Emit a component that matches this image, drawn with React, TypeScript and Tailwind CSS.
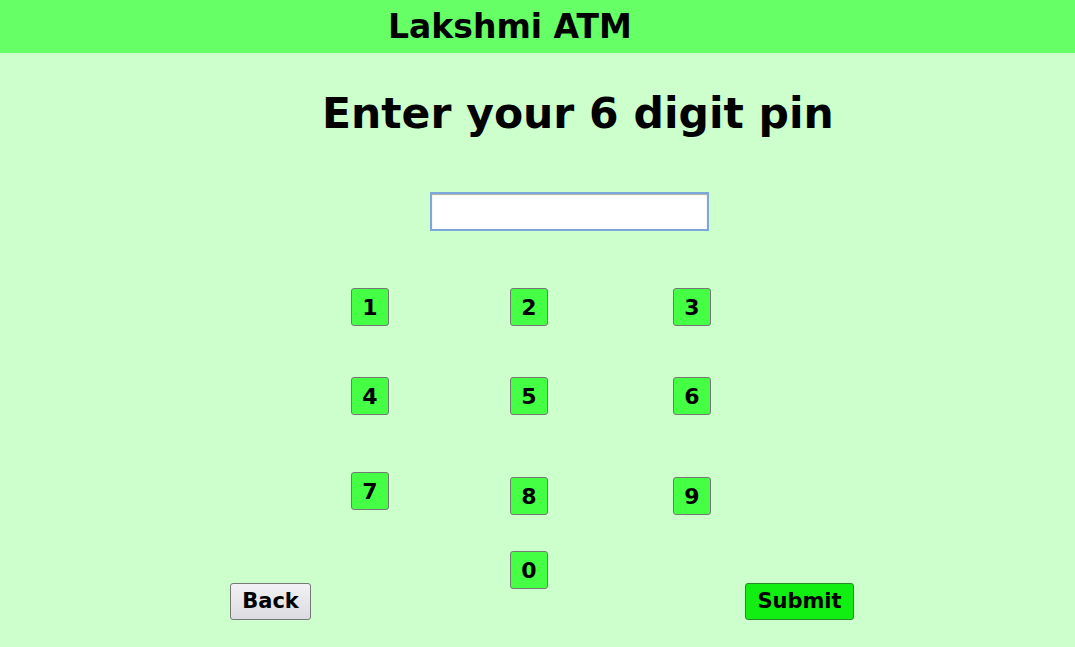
import React, { useState } from 'react'

const font = { fontFamily: '"DejaVu Sans", Verdana, sans-serif' }

function Key({ label, onPress, className = '' }: { label: string; onPress: (d: string) => void; className?: string }) {
  return (
    <button
      onClick={() => onPress(label)}
      className={`w-[38px] h-[38px] bg-[#44ff44] border border-[#777777] rounded-[3px] text-[22px] font-bold text-black flex items-center justify-center ${className}`}
    >
      {label}
    </button>
  )
}

export default function App() {
  const [pin, setPin] = useState('')

  function press(d: string) {
    if (pin.length < 6) setPin(pin + d)
  }

  return (
    <div className="min-h-screen bg-[#ccffcc] text-black" style={font}>
      <div className="h-[53px] bg-[#66ff66] pl-[388px] text-[33px] leading-[53px] font-bold">Lakshmi ATM</div>

      <h1 className="mt-[36px] pl-[322px] text-[42.5px] leading-[50px] font-bold">Enter your 6 digit pin</h1>

      <input
        type="password"
        value={pin}
        onChange={e => setPin(e.target.value.slice(0, 6))}
        className="block mt-[53px] ml-[430px] w-[279px] h-[39px] bg-white border-2 border-[#7ba7dc] shadow-[inset_0_1px_1px_#aaaaaa] px-2 text-[20px] outline-none"
      />

      <div className="flex mt-[57px] ml-[351px]">
        <Key label="1" onPress={press} />
        <Key label="2" onPress={press} className="ml-[121px]" />
        <Key label="3" onPress={press} className="ml-[125px]" />
      </div>

      <div className="flex mt-[51px] ml-[351px]">
        <Key label="4" onPress={press} />
        <Key label="5" onPress={press} className="ml-[121px]" />
        <Key label="6" onPress={press} className="ml-[125px]" />
      </div>

      <div className="flex items-start mt-[57px] ml-[351px]">
        <Key label="7" onPress={press} />
        <Key label="8" onPress={press} className="ml-[121px] mt-[5px]" />
        <Key label="9" onPress={press} className="ml-[125px] mt-[5px]" />
      </div>

      <div className="flex items-start mt-[36px] ml-[230px]">
        <button
          onClick={() => setPin(pin.slice(0, -1))}
          className="mt-[32px] w-[81px] h-[37px] rounded-[3px] border border-[#777777] bg-gradient-to-b from-[#f2f2f5] to-[#dcdce0] text-[21px] font-bold"
        >
          Back
        </button>
        <Key label="0" onPress={press} className="ml-[199px]" />
        <button
          onClick={() => alert('PIN submitted')}
          className="mt-[32px] ml-[197px] w-[109px] h-[37px] rounded-[3px] border border-[#2a8a2a] bg-[#11ee11] text-[21px] font-bold"
        >
          Submit
        </button>
      </div>
    </div>
  )
}
